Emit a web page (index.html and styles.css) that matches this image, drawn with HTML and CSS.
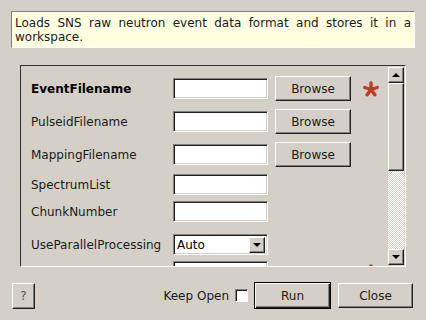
FILE: index.html
```html
<!DOCTYPE html>
<html>
<head>
<meta charset="utf-8">
<link rel="stylesheet" href="styles.css">
</head>
<body>
<div class="page">
  <div class="desc">Loads SNS raw neutron event data format and stores it in a workspace.</div>
  <div class="frame">
    <div class="content">
      <div class="row tall first">
        <span class="label bold">EventFilename</span>
        <span class="input"></span>
        <span class="btn browse">Browse</span>
        <span class="star"><svg width="16" height="16" viewBox="0 0 16 16"><g stroke="#bb3a2a" stroke-width="3.4" stroke-linecap="round"><line x1="8" y1="8.5" x2="8" y2="2"/><line x1="8" y1="8.5" x2="14.2" y2="6.5"/><line x1="8" y1="8.5" x2="11.8" y2="13.8"/><line x1="8" y1="8.5" x2="4.2" y2="13.8"/><line x1="8" y1="8.5" x2="1.8" y2="6.5"/></g></svg></span>
      </div>
      <div class="row tall">
        <span class="label">PulseidFilename</span>
        <span class="input"></span>
        <span class="btn browse">Browse</span>
      </div>
      <div class="row tall">
        <span class="label">MappingFilename</span>
        <span class="input"></span>
        <span class="btn browse">Browse</span>
      </div>
      <div class="row short m7">
        <span class="label">SpectrumList</span>
        <span class="input"></span>
      </div>
      <div class="row short m6">
        <span class="label">ChunkNumber</span>
        <span class="input"></span>
      </div>
      <div class="row short m12">
        <span class="label">UseParallelProcessing</span>
        <span class="input combo"><span class="combo-text">Auto</span><span class="combo-btn"><span class="arrow-down"></span></span></span>
      </div>
      <div class="row short m6">
        <span class="label"></span>
        <span class="input"></span>
        <span class="btn-space"></span>
        <span class="star"><svg width="16" height="16" viewBox="0 0 16 16"><g stroke="#bb3a2a" stroke-width="3.4" stroke-linecap="round"><line x1="8" y1="8.5" x2="8" y2="2"/><line x1="8" y1="8.5" x2="14.2" y2="6.5"/><line x1="8" y1="8.5" x2="11.8" y2="13.8"/><line x1="8" y1="8.5" x2="4.2" y2="13.8"/><line x1="8" y1="8.5" x2="1.8" y2="6.5"/></g></svg></span>
      </div>
    </div>
    <div class="scrollbar">
      <div class="sb-btn"><span class="arrow-up"></span></div>
      <div class="sb-thumb"></div>
      <div class="sb-track"></div>
      <div class="sb-btn"><span class="arrow-down"></span></div>
    </div>
  </div>
  <div class="footer">
    <span class="btn help">?</span>
    <span class="spacer"></span>
    <span class="keep">Keep Open</span>
    <span class="check"></span>
    <span class="btn run">Run</span>
    <span class="btn close">Close</span>
  </div>
</div>
</body>
</html>
```

FILE: styles.css
```css
html, body {
  margin: 0;
  padding: 0;
  background: #d4d0c8;
}
body {
  font-family: "DejaVu Sans", sans-serif;
  font-size: 12px;
  color: #000;
  width: 426px;
  height: 320px;
  overflow: hidden;
}
.page {
  padding: 11px;
  display: flex;
  flex-direction: column;
}
.desc {
  height: 37px;
  box-sizing: border-box;
  background: #ffffe1;
  border-top: 1px solid #808080;
  border-left: 1px solid #808080;
  border-right: 1px solid #ffffff;
  border-bottom: 1px solid #ffffff;
  padding: 4px 3px 3px 3px;
  line-height: 14px;
  text-align: justify;
  color: #1a1a1a;
}
.frame {
  margin: 17px 9px 0 9px;
  height: 202px;
  box-sizing: border-box;
  border-top: 1px solid #303030;
  border-left: 1px solid #303030;
  border-right: 1px solid #ffffff;
  border-bottom: 1px solid #ffffff;
  display: flex;
}
.content {
  flex: 1;
  overflow: hidden;
  padding: 10px 0 0 10px;
}
.row {
  display: flex;
  align-items: center;
  margin-top: 8px;
}
.row.first { margin-top: 0; }
.row.tall { height: 25px; }
.row.short { height: 21px; }
.row.m7 { margin-top: 7px; }
.row.m6 { margin-top: 6px; }
.row.m12 { margin-top: 12px; }
.label {
  width: 142px;
  flex: none;
  color: #1a1a1a;
}
.label.bold { font-weight: bold; color: #000; }
.input {
  width: 95px;
  height: 21px;
  box-sizing: border-box;
  flex: none;
  background: #fff;
  border-top: 1px solid #808080;
  border-left: 1px solid #808080;
  border-right: 1px solid #ffffff;
  border-bottom: 1px solid #ffffff;
  box-shadow: inset 1px 1px 0 #202020, inset -1px -1px 0 #d4d0c8;
}
.combo {
  display: flex;
  align-items: center;
  justify-content: space-between;
  padding: 0 2px 0 3px;
}
.combo-text { line-height: 14px; }
.combo-btn {
  width: 16px;
  height: 16px;
  box-sizing: border-box;
  background: #d4d0c8;
  border-top: 1px solid #ffffff;
  border-left: 1px solid #ffffff;
  border-right: 1px solid #202020;
  border-bottom: 1px solid #202020;
  box-shadow: inset -1px -1px 0 #808080;
  display: flex;
  align-items: center;
  justify-content: center;
}
.btn {
  box-sizing: border-box;
  background: #d4d0c8;
  border-top: 1px solid #ffffff;
  border-left: 1px solid #ffffff;
  border-right: 1px solid #202020;
  border-bottom: 1px solid #202020;
  box-shadow: inset -1px -1px 0 #808080;
  display: flex;
  align-items: center;
  justify-content: center;
  color: #1a1a1a;
  flex: none;
}
.browse {
  width: 76px;
  height: 25px;
  margin-left: 7px;
}
.btn-space {
  width: 83px;
  flex: none;
}
.star {
  margin-left: 12px;
  width: 16px;
  height: 16px;
  flex: none;
}
.star svg { display: block; }
.scrollbar {
  width: 16px;
  margin-right: 1px;
  padding: 1px 0 1px 0;
  display: flex;
  flex-direction: column;
  flex: none;
}
.sb-btn {
  height: 16px;
  box-sizing: border-box;
  background: #d4d0c8;
  border-top: 1px solid #ffffff;
  border-left: 1px solid #ffffff;
  border-right: 1px solid #202020;
  border-bottom: 1px solid #202020;
  box-shadow: inset -1px -1px 0 #808080;
  display: flex;
  align-items: center;
  justify-content: center;
  flex: none;
}
.sb-thumb {
  height: 88px;
  box-sizing: border-box;
  background: #d4d0c8;
  border-top: 1px solid #ffffff;
  border-left: 1px solid #ffffff;
  border-right: 1px solid #202020;
  border-bottom: 1px solid #202020;
  box-shadow: inset -1px -1px 0 #808080;
  flex: none;
}
.sb-track {
  flex: 1;
  background: repeating-conic-gradient(#ffffff 0 25%, #d4d0c8 0 50%) 0 0 / 2px 2px;
}
.arrow-up {
  width: 0;
  height: 0;
  border-left: 4px solid transparent;
  border-right: 4px solid transparent;
  border-bottom: 4px solid #000;
}
.arrow-down {
  width: 0;
  height: 0;
  border-left: 4px solid transparent;
  border-right: 4px solid transparent;
  border-top: 4px solid #000;
}
.footer {
  margin-top: 15px;
  height: 27px;
  display: flex;
  align-items: center;
}
.help {
  width: 23px;
  height: 26px;
  margin-left: 1px;
  color: #555;
}
.spacer { flex: 1; }
.keep { color: #1a1a1a; }
.check {
  width: 13px;
  height: 13px;
  box-sizing: border-box;
  margin-left: 6px;
  background: #fff;
  border-top: 1px solid #808080;
  border-left: 1px solid #808080;
  border-right: 1px solid #ffffff;
  border-bottom: 1px solid #ffffff;
  box-shadow: inset 1px 1px 0 #202020;
  flex: none;
}
.run {
  width: 77px;
  height: 27px;
  margin-left: 6px;
  outline: none;
  border: 1px solid #000;
  box-shadow: inset 1px 1px 0 #ffffff, inset -1px -1px 0 #202020, inset -2px -2px 0 #808080;
}
.close {
  width: 75px;
  height: 25px;
  margin-left: 7px;
  margin-right: 2px;
}
```
